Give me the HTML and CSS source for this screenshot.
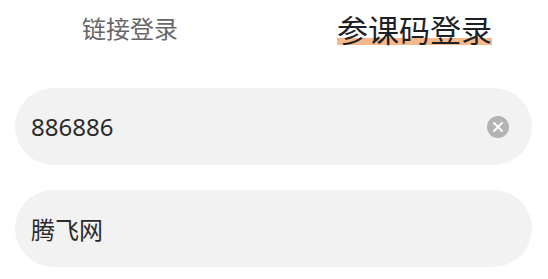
FILE: index.html
```html
<!DOCTYPE html>
<html lang="zh-CN">
<head>
<meta charset="utf-8">
<link rel="stylesheet" href="styles.css">
</head>
<body>
<div class="page">
  <div class="tabs">
    <div class="tab">链接登录</div>
    <div class="tab active"><span class="label">参课码登录</span></div>
  </div>
  <div class="fields">
    <div class="field">
      <span class="value">886886</span>
      <span class="clear">
        <svg width="22" height="22" viewBox="0 0 22 22"><circle cx="11" cy="11" r="11" fill="#b4b4b4"/><path d="M7 7 L15 15 M15 7 L7 15" stroke="#fff" stroke-width="2" stroke-linecap="round"/></svg>
      </span>
    </div>
    <div class="field">
      <span class="value">腾飞网</span>
    </div>
  </div>
</div>
</body>
</html>
```

FILE: styles.css
```css
html, body {
  margin: 0;
  padding: 0;
  background: #ffffff;
}
body {
  font-family: "Noto Sans", "Noto Sans CJK SC", sans-serif;
  width: 548px;
  height: 279px;
  overflow: hidden;
}
.page {
  display: flex;
  flex-direction: column;
}
.tabs {
  display: flex;
  height: 88px;
  align-items: flex-start;
}
.tab {
  font-family: "Noto Sans CJK SC", sans-serif;
  font-size: 24px;
  line-height: 24px;
  color: #666666;
  margin-left: 82px;
  margin-top: 16px;
}
.tab.active {
  font-size: 31px;
  line-height: 31px;
  color: #1d2126;
  margin-left: 159px;
  margin-top: 13px;
}
.label {
  position: relative;
  display: inline-block;
  z-index: 0;
}
.label::after {
  content: "";
  position: absolute;
  left: 0;
  right: 0;
  bottom: -1px;
  height: 7px;
  background: #f6b88a;
  z-index: -1;
}
.fields {
  display: flex;
  flex-direction: column;
  gap: 25px;
  padding: 0 16px 0 15px;
}
.field {
  height: 77px;
  border-radius: 39px;
  background: #f2f2f2;
  display: flex;
  align-items: center;
  padding: 0 23px 0 16px;
}
.value {
  flex: 1;
  font-size: 24px;
  color: #2b2b2b;
}
.clear {
  display: flex;
  width: 22px;
  height: 22px;
}
```
